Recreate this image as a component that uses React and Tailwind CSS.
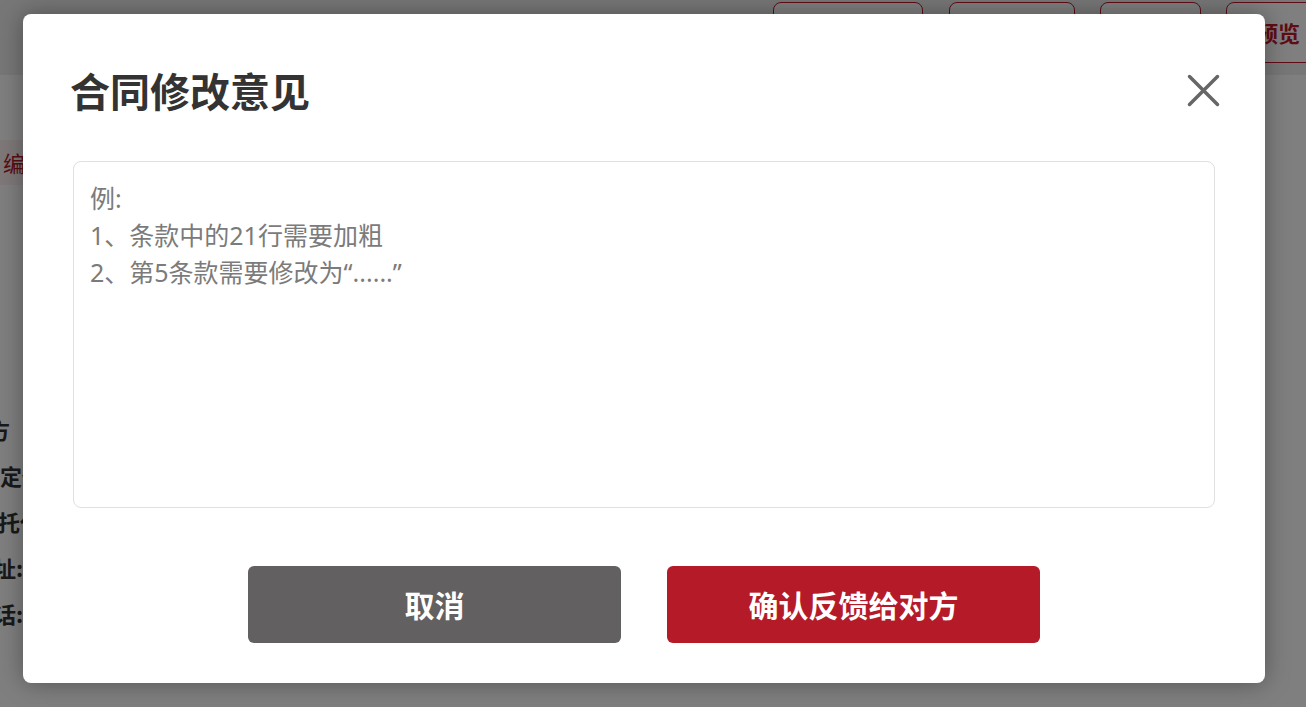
import React from "react";

const FONT = { fontFamily: '"Noto Sans CJK SC", "Noto Sans", sans-serif' };
const FONT_MIX = { fontFamily: '"Noto Sans", "Noto Sans CJK SC", sans-serif' };

function HeaderButton({ className, children }) {
  return (
    <div
      className={`shrink-0 h-[61px] rounded-[8px] border border-[#c0192b] bg-white flex items-center text-[#c0192b] text-[22px] font-bold ${className}`}
    >
      {children}
    </div>
  );
}

export default function App() {
  const placeholder = "例:\n1、条款中的21行需要加粗\n2、第5条款需要修改为“......”";
  return (
    <div className="relative w-full h-[707px] overflow-hidden bg-white" style={FONT}>
      {/* background page */}
      <div className="h-[75px] bg-[#eeeeee] flex justify-end items-start pt-[2px] gap-[25px]">
        <HeaderButton className="w-[150px] mr-[1px]" />
        <HeaderButton className="w-[126px]" />
        <HeaderButton className="w-[101px]" />
        <HeaderButton className="w-[120px] -mr-[40px] pl-[29px]">预览</HeaderButton>
      </div>
      <div className="flex flex-col pt-[65px]">
        <div className="w-[220px] h-[45px] bg-[#fdf1f2] pl-[3px] text-[22px] leading-[45px] text-[#b51a28]">编辑</div>
        <div className="mt-[221px] flex flex-col text-[22px] font-bold text-[#333] whitespace-nowrap">
          <div className="h-[46px] leading-[46px] -ml-[34px]">甲方</div>
          <div className="h-[46px] leading-[46px] -ml-[22px]">法定代表人:</div>
          <div className="h-[46px] leading-[46px] -ml-[24px]">委托代理人:</div>
          <div className="h-[46px] leading-[46px] -ml-[28px]">地址:</div>
          <div className="h-[46px] leading-[46px] -ml-[28px]">电话:</div>
        </div>
      </div>

      {/* overlay */}
      <div className="absolute inset-0 bg-black/50" />

      {/* modal */}
      <div className="absolute left-[23px] top-[14px] w-[1242px] h-[669px] bg-white rounded-[8px] shadow-[0_0_24px_rgba(0,0,0,0.35)] flex flex-col px-[50px] pt-[52px] pb-[40px]">
        <div className="flex items-center justify-between h-[48px]">
          <h2 className="-ml-[3px] text-[40px] leading-[48px] font-bold text-[#333]">合同修改意见</h2>
          <button className="-mr-[5px] w-[33px] h-[33px] flex items-center justify-center">
            <svg width="33" height="33" viewBox="0 0 33 33">
              <path d="M2.5 2.5 L30.5 30.5 M30.5 2.5 L2.5 30.5" stroke="#666" strokeWidth="3.5" strokeLinecap="round" fill="none" />
            </svg>
          </button>
        </div>
        <textarea
          className="mt-[47px] h-[347px] w-full resize-none rounded-[8px] border border-[#e0e0e0] pt-[18px] px-[16px] text-[25px] leading-[37px] text-[#333] outline-none placeholder:text-[#7b7b7b]"
          placeholder={placeholder}
          style={FONT_MIX}
        />
        <div className="mt-[58px] flex justify-center gap-[46px]">
          <button className="w-[373px] h-[77px] rounded-[6px] bg-[#626061] text-white text-[30px] font-bold" style={FONT}>
            取消
          </button>
          <button className="w-[373px] h-[77px] rounded-[6px] bg-[#b51a28] text-white text-[30px] font-bold" style={FONT}>
            确认反馈给对方
          </button>
        </div>
      </div>
    </div>
  );
}
